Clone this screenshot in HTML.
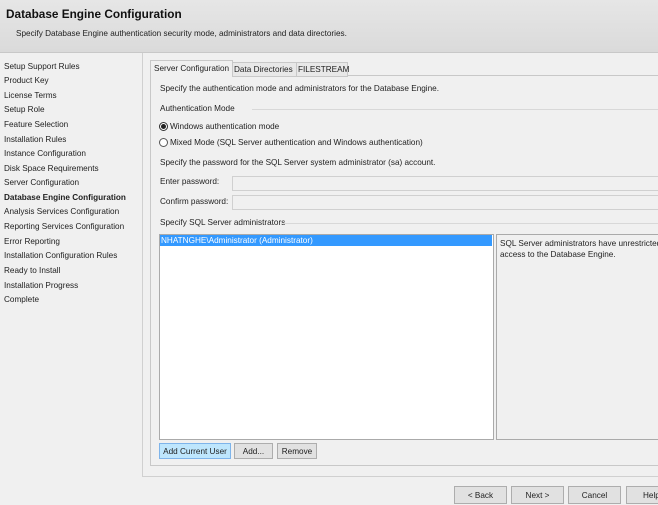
<!DOCTYPE html>
<html><head><style>
body{margin:0;width:658px;height:503px;overflow:hidden;background:#f0f0f0;font-family:"Liberation Sans",sans-serif;font-size:8.2px;color:#1e1e1e;position:relative}
.a{position:absolute;white-space:nowrap}
.hdr{position:absolute;left:0;top:0;width:658px;height:52px;background:linear-gradient(#e6e6e6,#dadada);border-bottom:1px solid #c8c8c8}
.nav div{position:absolute;left:4px}
.btn{position:absolute;height:16px;border:1px solid #adadad;background:#e1e1e1;text-align:center;line-height:16px;box-sizing:border-box}
.inp{position:absolute;left:232px;width:430px;height:13px;border:1px solid #d0d0d0;background:#f0f0f0}
</style></head><body>
<div class="hdr"></div>
<div class="a" style="left:6px;top:7px;font-size:11.8px;font-weight:bold;color:#111">Database Engine Configuration</div>
<div class="a" style="left:16px;top:29px">Specify Database Engine authentication security mode, administrators and data directories.</div>
<div class="nav">
<div style="top:62px">Setup Support Rules</div>
<div style="top:76px">Product Key</div>
<div style="top:91px">License Terms</div>
<div style="top:105px">Setup Role</div>
<div style="top:120px">Feature Selection</div>
<div style="top:135px">Installation Rules</div>
<div style="top:149px">Instance Configuration</div>
<div style="top:164px">Disk Space Requirements</div>
<div style="top:178px">Server Configuration</div>
<div style="top:193px;font-weight:bold">Database Engine Configuration</div>
<div style="top:207px">Analysis Services Configuration</div>
<div style="top:222px">Reporting Services Configuration</div>
<div style="top:237px">Error Reporting</div>
<div style="top:251px">Installation Configuration Rules</div>
<div style="top:266px">Ready to Install</div>
<div style="top:281px">Installation Progress</div>
<div style="top:295px">Complete</div>
</div>
<div class="a" style="left:142px;top:53px;width:1px;height:423px;background:#d0d0d0"></div>
<div class="a" style="left:150px;top:75px;width:520px;height:391px;border:1px solid #c8c8c8;box-sizing:border-box"></div>
<div class="a" style="left:150px;top:60px;width:81px;height:16px;border:1px solid #c8c8c8;border-bottom:none;background:#f0f0f0;line-height:16px;text-indent:3px">Server Configuration</div>
<div class="a" style="left:232px;top:62px;width:63px;height:13px;border:1px solid #c8c8c8;background:#e8e8e8;line-height:13px;text-indent:1px">Data Directories</div>
<div class="a" style="left:296px;top:62px;width:50px;height:13px;border:1px solid #c8c8c8;background:#e8e8e8;line-height:13px;text-indent:1px">FILESTREAM</div>
<div class="a" style="left:160px;top:84px">Specify the authentication mode and administrators for the Database Engine.</div>
<div class="a" style="left:160px;top:104px">Authentication Mode</div>
<div class="a" style="left:252px;top:109px;width:410px;height:1px;background:#d8d8d8"></div>
<div class="a" style="left:159px;top:122px;width:7px;height:7px;border:1px solid #333;border-radius:50%;background:#fff"></div>
<div class="a" style="left:161px;top:124px;width:5px;height:5px;border-radius:50%;background:#222"></div>
<div class="a" style="left:170px;top:122px">Windows authentication mode</div>
<div class="a" style="left:159px;top:138px;width:7px;height:7px;border:1px solid #555;border-radius:50%;background:#fff"></div>
<div class="a" style="left:170px;top:138px">Mixed Mode (SQL Server authentication and Windows authentication)</div>
<div class="a" style="left:160px;top:158px">Specify the password for the SQL Server system administrator (sa) account.</div>
<div class="a" style="left:160px;top:177px">Enter password:</div><div class="inp" style="top:176px"></div>
<div class="a" style="left:160px;top:197px">Confirm password:</div><div class="inp" style="top:195px"></div>
<div class="a" style="left:160px;top:218px">Specify SQL Server administrators</div>
<div class="a" style="left:284px;top:223px;width:380px;height:1px;background:#d8d8d8"></div>
<div class="a" style="left:159px;top:234px;width:335px;height:206px;border:1px solid #aaa;background:#fff;box-sizing:border-box"></div>
<div class="a" style="left:160px;top:235px;width:332px;height:11px;background:#3399ff;color:#fff;line-height:11px;text-indent:1px">NHATNGHE\Administrator (Administrator)</div>
<div class="a" style="left:496px;top:234px;width:170px;height:206px;border:1px solid #aaa;box-sizing:border-box"></div>
<div class="a" style="left:500px;top:238px;line-height:11px">SQL Server administrators have unrestricted<br>access to the Database Engine.</div>
<div class="btn" style="left:159px;top:443px;width:72px;background:#bee6fd;border-color:#7eb4ea">Add Current User</div>
<div class="btn" style="left:234px;top:443px;width:39px">Add...</div>
<div class="btn" style="left:277px;top:443px;width:40px">Remove</div>
<div class="a" style="left:142px;top:476px;width:516px;height:1px;background:#d0d0d0"></div>
<div class="btn" style="left:454px;top:486px;width:53px;height:18px;line-height:18px">&lt; Back</div>
<div class="btn" style="left:511px;top:486px;width:53px;height:18px;line-height:18px">Next &gt;</div>
<div class="btn" style="left:568px;top:486px;width:53px;height:18px;line-height:18px">Cancel</div>
<div class="btn" style="left:626px;top:486px;width:53px;height:18px;line-height:18px;text-align:left;padding-left:16px">Help</div>
</body></html>
